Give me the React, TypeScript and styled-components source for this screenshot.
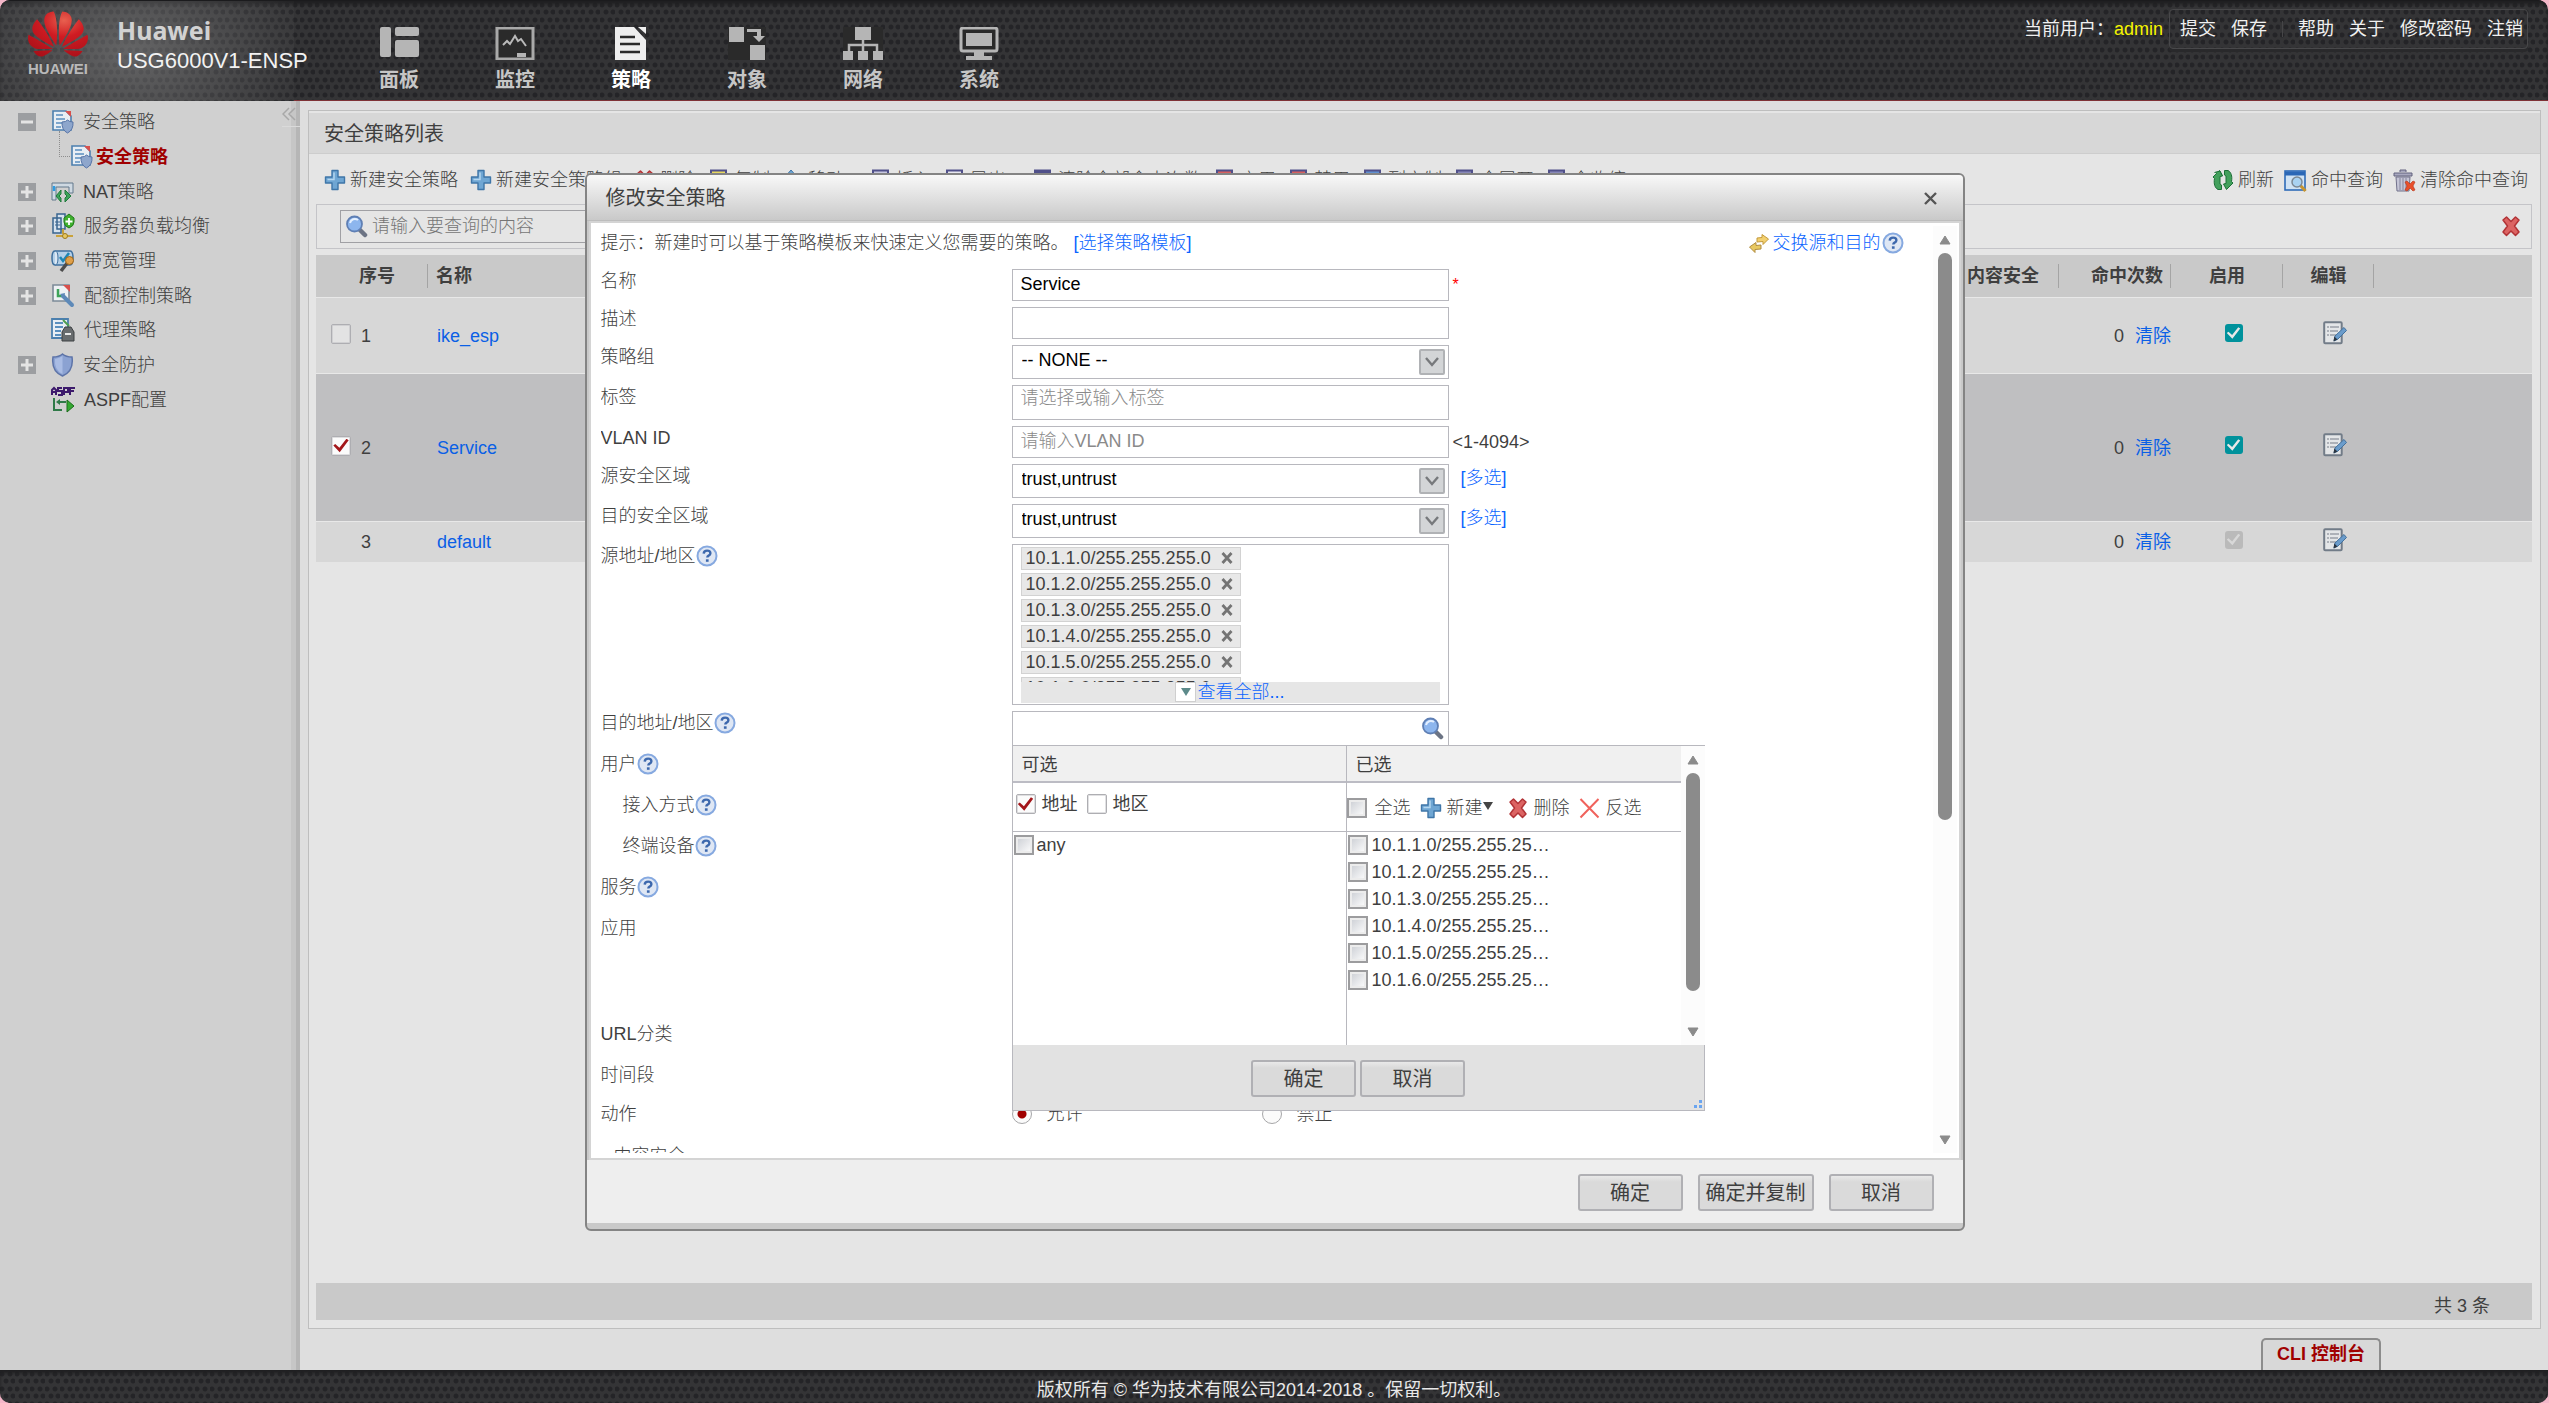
import React from 'react';
import styled, { createGlobalStyle, css } from 'styled-components';
import { SiHuawei } from 'react-icons/si';

const Global = createGlobalStyle`
  *, *::before, *::after { box-sizing: border-box; }
  body {
    margin: 0;
    background: #f4b6c8;
    color: #3f3f3f;
    font: 300 18px/24px "Liberation Sans", Arial, "Noto Sans CJK SC", sans-serif;
    overflow: hidden;
  }
  ul { list-style: none; margin: 0; padding: 0; }
  a { color: inherit; text-decoration: none; }
  button, input, select { font: inherit; color: inherit; }
  button { border: 0; padding: 0; background: none; cursor: pointer; }
  svg { display: block; flex: none; }
`;

const dots = css`
  background-color: #343436;
  background-image:
    radial-gradient(circle at 2px 4px, #242427 2px, transparent 3px),
    radial-gradient(circle at 10px 4px, #242427 2px, transparent 3px),
    radial-gradient(circle at 6px 11px, #242427 2px, transparent 3px),
    radial-gradient(circle at 13px 11px, #242427 2px, transparent 3px);
  background-size: 15px 15px;
`;

const App$ = styled.div`
  height: 100vh;
  margin-right: 1px;
  display: grid;
  grid-template-rows: 101px 1fr 33px;
  border-radius: 10px;
  overflow: hidden;
`;

/* ---------- header ---------- */
const Header = styled.header`
  ${dots}
  display: flex;
  border-top: 1px solid #1b1b1d;
  box-shadow: inset 0 3px 3px #1f1f21;
`;
const Brand = styled.div`
  width: 294px;
  flex: none;
  display: flex;
  gap: 29px;
  padding: 3px 0 0 28px;
  background: radial-gradient(ellipse 190px 130px at 130px 50px, rgba(150, 150, 150, 0.5), transparent);
  white-space: nowrap;
`;
const Logo = styled.div`
  width: 60px;
  font-weight: 700;
  font-size: 15px;
  line-height: 10px;
  color: #b9b9b9;
  text-align: center;
  display: flex;
  flex-direction: column;
  align-items: center;
`;
const BrandText = styled.div`
  padding-top: 11px;
  color: #f2f2f2;
  font-size: 22px;
  line-height: 32px;
`;
const BrandName = styled.div`
  font: 700 25px/30px "Noto Sans", sans-serif;
  color: #d2d2d2;
`;
const HeadRest = styled.div`
  flex: 1;
  display: flex;
  justify-content: space-between;
  border-bottom: 1px solid #7e3236;
`;
const MainNav = styled.nav`
  display: flex;
  gap: 36px;
  padding: 26px 0 0 65px;
`;
const NavItem = styled.a<{ $on?: boolean }>`
  width: 80px;
  display: flex;
  flex-direction: column;
  align-items: center;
  gap: 8px;
  font-weight: 700;
  font-size: 20px;
  line-height: 24px;
  color: ${p => (p.$on ? '#ffffff' : '#c6c6c6')};
`;
const UserArea = styled.div`
  display: flex;
  align-items: flex-start;
  padding: 8px 20px 0 0;
  font-weight: 400;
  color: #f0f0f0;
  line-height: 40px;
`;
const Admin = styled.span`
  color: #f5f500;
  padding-right: 6px;
`;
const UserLinks = styled.div`
  display: flex;
  gap: 15px;
  padding: 0 4px 0 10px;
  border: 1px solid #48484a;
  border-radius: 4px;
  box-shadow: 0 3px 0 #29292b;
  line-height: 38px;
`;
const Bar = styled.span`
  width: 0;
  height: 16px;
  align-self: center;
  border-left: 1px solid #454547;
`;

/* ---------- sidebar ---------- */
const Middle = styled.div`
  display: grid;
  grid-template-columns: 300px 1fr;
  min-height: 0;
`;
const Side = styled.aside`
  display: flex;
  justify-content: space-between;
  background: linear-gradient(90deg, #d0d0d0 0 291px, #c6c6c6 291px 296px, #b6b6b6 296px);
`;
const Tree = styled.ul`
  height: 312px;
  margin-top: 4px;
  display: grid;
  grid-auto-rows: 1fr;
`;
const TreeRow = styled.li<{ $sub?: boolean }>`
  display: flex;
  align-items: center;
  padding-left: ${p => (p.$sub ? 59 : 18)}px;
  a {
    display: flex;
    align-items: center;
    gap: ${p => (p.$sub ? 3 : 9)}px;
    color: ${p => (p.$sub ? '#a00000' : '#3f3f3f')};
    font-weight: ${p => (p.$sub ? 700 : 300)};
  }
`;
const Toggle = styled.button`
  width: 18px;
  height: 18px;
  margin-right: 15px;
  background: #9c9ea1;
  color: #e4e4e4;
`;
const NoToggle = styled.span`
  width: 33px;
`;
const Elbow = styled.span`
  width: 11px;
  height: 26px;
  margin-top: -26px;
  border: dotted #8d8d8d;
  border-width: 0 0 1px 1px;
`;
const Collapse = styled.button`
  width: 18px;
  height: 26px;
  border-bottom: 1px solid #dadada;
  color: #a8a8a8;
`;

/* ---------- main ---------- */
const Main = styled.main`
  display: flex;
  flex-direction: column;
  min-width: 0;
  padding: 9px 7px 0 8px;
  background: #dedede;
`;
const Panel = styled.section`
  flex: 1;
  display: flex;
  flex-direction: column;
  border: 1px solid #bebebe;
  background: #e5e5e5;
  padding-top: 2px;
`;
const PanelTitle = styled.h1`
  margin: 0;
  padding: 3px 0 0 15px;
  font-weight: 400;
  font-size: 20px;
  line-height: 37px;
  background: #d7d7d7;
  border-bottom: 1px solid #cdcdcd;
`;
const Toolbar = styled.div`
  height: 50px;
  display: flex;
  align-items: center;
  gap: 12px;
  padding: 2px 12px 0 15px;
  white-space: nowrap;
`;
const ToolTail = styled.div`
  display: flex;
  gap: 10px;
  margin-left: auto;
`;
const Tool = styled.button`
  display: flex;
  align-items: center;
  gap: 4px;
  font-weight: 300;
`;
const PanelBody = styled.div`
  flex: 1;
  display: flex;
  flex-direction: column;
  padding: 0 8px 8px 7px;
`;
const SearchBar = styled.div`
  height: 45px;
  display: flex;
  align-items: center;
  justify-content: space-between;
  padding: 0 9px 1px 23px;
  border: 1px solid #c4c4c8;
  margin-bottom: 6px;
`;
const SearchBox = styled.label`
  width: 400px;
  height: 33px;
  display: flex;
  align-items: center;
  gap: 4px;
  padding-left: 4px;
  border: 1px solid #a0a0a4;
`;
const BareInput = styled.input`
  flex: 1;
  min-width: 0;
  height: 100%;
  border: 0;
  padding: 0;
  outline: 0;
  background: transparent;
  &::placeholder { color: #757575; opacity: 1; }
`;
const Grid = styled.table`
  width: 100%;
  table-layout: fixed;
  border-collapse: separate;
  border-spacing: 0;
  th {
    height: 42px;
    padding: 0 8px;
    text-align: left;
    font-weight: 700;
    background: #c9c9c9 linear-gradient(#a4a4a4, #a4a4a4) right center / 1px 24px no-repeat;
  }
  td { padding: 0 0 0 9px; border-top: 1px solid #e8e8e8; }
`;
const Th = styled.th<{ $align?: string; $pad?: number; $plain?: boolean }>`
  &&& {
    text-align: ${p => p.$align || 'left'};
    ${p => p.$pad && `padding-${p.$align === 'right' ? 'right' : 'left'}: ${p.$pad}px;`}
    ${p => p.$plain && 'background-image: none;'}
  }
`;
const Tr = styled.tr<{ $h: number; $sel?: boolean }>`
  height: ${p => p.$h}px;
  background: ${p => (p.$sel ? '#bfbfc1' : '#d7d7d7')};
`;
const NumCell = styled.div`
  display: flex;
  align-items: center;
  gap: 10px;
  height: 24px;
  padding-left: 6px;
  > input { align-self: flex-start; }
`;
const Blank = styled.span`
  width: 20px;
`;
const RightCell = styled.div`
  display: flex;
  justify-content: flex-end;
  gap: 11px;
  font-weight: 400;
`;
const MidCell = styled.div`
  display: flex;
  justify-content: center;
  padding: 0 0 5px 4px;
`;
const RowLink = styled.a`
  color: #0a5fe6;
`;
const Summary = styled.div`
  height: 37px;
  margin-top: auto;
  padding: 4px 42px 0 0;
  text-align: right;
  line-height: 39px;
  background: #c9c9c9;
  font-weight: 400;
`;
const Bottom = styled.div`
  height: 41px;
  display: flex;
  justify-content: flex-end;
  align-items: flex-end;
  padding-right: 160px;
`;
const CliTab = styled.button`
  height: 32px;
  width: 120px;
  padding-bottom: 2px;
  border: 1px solid #8c8c8c;
  border-width: 2px 2px 0;
  border-radius: 5px 5px 0 0;
  background: #d8d8d8;
  color: #a00000;
  font-weight: 700;
`;
const Footer = styled.footer`
  ${dots}
  text-align: center;
  color: #e8e8e8;
  font-weight: 400;
  line-height: 41px;
  box-shadow: inset 0 3px 3px #1f1f21;
`;

/* ---------- controls ---------- */
const Check = styled.input.attrs({ type: 'checkbox' })<{ $kind?: 'teal' | 'grey' }>`
  appearance: none;
  flex: none;
  display: grid;
  place-items: center;
  width: 20px;
  height: 20px;
  margin: 0;
  border: 1px solid #aeaeb2;
  border-radius: 2px;
  background: rgba(255, 255, 255, 0.3);
  box-shadow: inset 0 0 0 1px rgba(180, 180, 184, 0.4);
  &:checked { background: #fbfbfb; }
  &:checked::before {
    content: '';
    width: 16px;
    height: 14px;
    background: #a3161a;
    clip-path: polygon(2% 50%, 14% 40%, 40% 66%, 84% 2%, 98% 12%, 42% 98%);
  }
  ${p => p.$kind === 'teal' && css`
    width: 18px;
    height: 18px;
    border: 0;
    border-radius: 3px;
    box-shadow: none;
    &:checked { background: #00929c; }
    &:checked:disabled { background: #bababa; }
    &:checked::before { background: #e8e8e8; width: 14px; height: 12px; }
    &:disabled::before { background: #d8d8d8; }
  `}
  ${p => p.$kind === 'grey' && css`
    border: 2px solid #9c9c9e;
    border-radius: 0;
    background: linear-gradient(135deg, #c9ccd2, #ffffff);
    box-shadow: inset 0 0 0 2px #ececec;
  `}
`;
const Radio = styled.input.attrs({ type: 'radio' })`
  appearance: none;
  width: 20px;
  height: 20px;
  margin: 0;
  border: 1px solid #a6a6a8;
  border-radius: 50%;
  background: #fbfbfb;
  &:checked { background: radial-gradient(circle, #a00000 4px, #fbfbfb 5px); }
`;
const Link = styled.a`
  color: #0a64ff;
`;

/* ---------- dialog ---------- */
const Overlay = styled.div`
  position: fixed;
  inset: 0;
  display: flex;
  align-items: center;
  justify-content: center;
`;
const Dialog = styled.div`
  width: 1380px;
  max-width: 96vw;
  height: 1058px;
  max-height: 96vh;
  display: flex;
  flex-direction: column;
  border: 2px solid #848484;
  border-radius: 6px;
  background: #c9c9c9;
  padding-bottom: 6px;
  overflow: hidden;
  font-weight: 300;
`;
const DialogHead = styled.div`
  height: 46px;
  flex: none;
  display: flex;
  align-items: center;
  justify-content: space-between;
  padding: 2px 25px 0 19px;
  background: linear-gradient(#f8f8f8, #c9c9c9);
  border-bottom: 1px solid #bdbdbd;
  h2 { margin: 0; font-size: 20px; font-weight: 400; }
`;
const DialogBody = styled.div`
  flex: 1;
  min-height: 0;
  display: flex;
  margin: 0 2px;
  padding: 3px 2px 5px 10px;
  border: 2px solid #d4d4d4;
  background: #ffffff;
`;
const Scroll = styled.div`
  flex: 1;
  min-width: 0;
  overflow: hidden;
`;
const HintLine = styled.div`
  height: 43px;
  display: flex;
  align-items: flex-start;
  padding: 5px 29px 0 0;
`;
const Swap = styled.span`
  margin-left: auto;
  display: flex;
  align-items: center;
  gap: 1px;
`;
const SwapLink = styled(Link)`
  display: flex;
  align-items: center;
  gap: 3px;
`;
const Fields = styled.div`
  display: flex;
  flex-direction: column;
  gap: 6px;
`;
const Field = styled.div<{ $h: number; $indent?: number }>`
  flex: none;
  height: ${p => p.$h}px;
  display: grid;
  grid-template: 100% / 411px 1fr;
  > :first-child { padding-left: ${p => p.$indent || 0}px; }
`;
const LabelCell = styled.div`
  display: flex;
  height: 24px;
  align-items: center;
`;
const Control = styled.div`
  min-height: 0;
  display: flex;
  align-items: center;
`;
const Box = styled.div`
  position: relative;
  width: 437px;
  height: 100%;
  border: 1px solid #b8b8be;
  background: #ffffff;
`;
const TextInput = styled.input<{ $top?: boolean }>`
  width: 437px;
  height: 100%;
  padding: 0 8px ${p => (p.$top ? 8 : 0)}px;
  border: 1px solid #b8b8be;
  color: #000000;
  outline: 0;
  &::placeholder { color: #8a8a8a; opacity: 1; }
`;
const Select = styled.select`
  appearance: none;
  width: 100%;
  height: 100%;
  padding: 0 36px 4px 9px;
  border: 0;
  background: transparent;
  color: #000000;
`;
const Arrow = styled.span`
  position: absolute;
  right: 3px;
  top: 3px;
  bottom: 3px;
  width: 26px;
  display: grid;
  place-items: center;
  border: 2px solid #b0b2b5;
  border-radius: 2px;
  background: #d3d5d7;
  pointer-events: none;
`;
const After = styled.span<{ $gap?: number; $red?: boolean }>`
  padding-left: ${p => p.$gap || 4}px;
  ${p => p.$red && 'color: #ff0000; font-size: 16px;'}
  ${p => p.$gap && 'padding-bottom: 6px;'}
`;
const TagBox = styled(Box)`
  padding: 2px 8px 1px;
  display: flex;
  flex-direction: column;
`;
const Tags = styled.ul`
  flex: 1;
  min-height: 0;
  overflow: hidden;
  display: flex;
  flex-direction: column;
  align-items: flex-start;
  gap: 3px;
`;
const Tag = styled.li`
  flex: none;
  width: 220px;
  height: 23px;
  display: flex;
  align-items: center;
  justify-content: space-between;
  padding: 0 7px 0 4px;
  border: 1px solid #d2d2d2;
  background: #e8e8e8;
  line-height: 20px;
`;
const MoreBar = styled.button`
  flex: none;
  height: 21px;
  display: flex;
  align-items: center;
  justify-content: center;
  gap: 1px;
  background: #e6e6e6;
  color: #0a64ff;
  font-weight: 300;
  line-height: 20px;
`;
const MoreArrow = styled.span`
  width: 21px;
  height: 20px;
  display: grid;
  place-items: center;
  border: 1px solid #cfcfcf;
  background: #ffffff;
`;
const FindBox = styled(Box)`
  display: flex;
  align-items: center;
  padding: 0 4px 0 8px;
`;
const RadioLabel = styled.label`
  display: flex;
  align-items: center;
  gap: 15px;
  width: 250px;
`;
const HelpBtn = styled.button`
  width: 22px;
  height: 22px;
`;
const DialogFoot = styled.div`
  height: 63px;
  flex: none;
  display: flex;
  justify-content: flex-end;
  align-items: center;
  gap: 15px;
  padding: 2px 29px 0 0;
  background: #eeeeee;
`;
const Btn = styled.button`
  min-width: 105px;
  height: 37px;
  padding: 2px 6px 0;
  border: 2px solid #b0b0b4;
  border-radius: 3px;
  background: linear-gradient(#e9e9e9, #dadada 6px);
  font-weight: 400;
  font-size: 20px;
`;

/* scroll bars */
const Rail = styled.div`
  width: 24px;
  flex: none;
  display: flex;
  flex-direction: column;
  align-items: center;
  padding: 9px 0 8px;
  background: #fcfcfc;
`;
const Thumb = styled.div<{ $grow: number }>`
  flex: ${p => p.$grow} 1 0;
  width: 14px;
  margin-top: 8px;
  border-radius: 7px;
  background: #8b8b8b;
`;
const RailRest = styled.div<{ $grow: number }>`
  flex: ${p => p.$grow} 1 0;
`;

/* ---------- picker popup ---------- */
const Picker = styled.div`
  position: absolute;
  z-index: 2;
  left: -1px;
  top: 100%;
  width: 693px;
  height: 366px;
  display: flex;
  flex-direction: column;
  border: 1px solid #b8b8be;
  background: #ffffff;
  font-weight: 400;
`;
const PickerMain = styled.div`
  flex: 1;
  min-height: 0;
  display: grid;
  grid-template-columns: 1fr 1fr 23px;
`;
const Column = styled.div`
  border-right: 1px solid #b8b8be;
  & + & { border-right: 0; }
`;
const ColHead = styled.div`
  height: 37px;
  padding-left: 9px;
  line-height: 38px;
  background: #f0f0f0;
  border-bottom: 2px solid #bcbcc4;
`;
const ColTools = styled.div<{ $thin?: boolean }>`
  height: 49px;
  display: flex;
  align-items: center;
  gap: 9px;
  padding: ${p => (p.$thin ? '3px 0 0 0' : '0 0 5px 3px')};
  border-bottom: 1px solid #b8b8be;
  font-weight: ${p => (p.$thin ? 300 : 400)};
  button { gap: 5px; }
`;
const MenuCaret = styled.span`
  margin: 0 5px 4px -5px;
`;
const Pick = styled.label<{ $gap?: number }>`
  display: flex;
  align-items: center;
  gap: ${p => p.$gap || 6}px;
`;
const PickList = styled.ul`
  padding: 0 0 0 1px;
  li { height: 27px; display: flex; align-items: center; }
`;
const PickerFoot = styled.div`
  position: relative;
  height: 65px;
  display: flex;
  align-items: center;
  justify-content: center;
  gap: 4px;
  padding-top: 2px;
  background: #e2e2e2;
`;
const Grip = styled.span`
  position: absolute;
  right: 1px;
  bottom: 1px;
`;

/* ---------- icons ---------- */
const Plus = () => (
  <svg width="22" height="22" viewBox="0 0 22 22">
    <path d="M8 1.500h6v6.500h6.500v6H14v6.500H8V14H1.500V8H8z" fill="#6fa6d3" stroke="#3f76a8" strokeWidth="1.400" strokeLinejoin="round" />
    <path d="M10 3.500v7H3.500" stroke="#b4d6f0" strokeWidth="1.500" fill="none" />
  </svg>
);
const RedX = () => (
  <svg width="22" height="22" viewBox="0 0 22 22">
    <path d="M3 5l3.500-3L11 6.500 15.500 2 19 5l-4.500 6 4.500 6-3.500 3.500L11 16l-4.500 4.500L3 17l4.500-6z" fill="#dc6463" stroke="#b23336" strokeWidth="1.500" strokeLinejoin="round" />
  </svg>
);
const ThinX = () => (
  <svg width="22" height="22" viewBox="0 0 22 22">
    <path d="M1.500 2l18 18.500M19.500 2l-18 18.500" stroke="#f0625c" strokeWidth="2" />
  </svg>
);
const Glass = () => (
  <svg width="23" height="23" viewBox="0 0 23 23">
    <path d="M14 14l6 6" stroke="#6c7484" strokeWidth="4.500" strokeLinecap="round" />
    <circle cx="9.500" cy="9" r="7.500" fill="#8db6ee" stroke="#5f7fb4" strokeWidth="1.800" />
    <path d="M5 8a5 5 0 0 1 8-3" stroke="#e4f0ff" strokeWidth="2" fill="none" />
  </svg>
);
const Help = () => (
  <HelpBtn type="button" aria-label="帮助">
    <svg width="22" height="22" viewBox="0 0 22 22">
      <circle cx="11" cy="11" r="9.500" fill="#dfe7f4" stroke="#86a9e0" strokeWidth="2" />
      <path d="M7.700 8.600q.2-3 3.400-3 3.300 0 3.300 2.600 0 1.500-1.800 2.400-1.300.7-1.300 2" fill="none" stroke="#3d68ad" strokeWidth="2.400" />
      <rect x="9.900" y="14.300" width="2.700" height="2.500" fill="#3d68ad" />
    </svg>
  </HelpBtn>
);
const Refresh = () => (
  <svg width="22" height="22" viewBox="0 0 22 22">
    <path d="M9.500 20.500H6C3 19 1.500 15 2.500 9.500L1 8l6.500-6.500L10.500 7 8 7.500V15l1.500 1z" fill="#43a05c" stroke="#1d7038" />
    <path d="M2.500 3.500L8 2l2.500 5" fill="#43a05c" stroke="#1d7038" />
    <path d="M12.500 1.500H16c3 1.500 4.500 5.500 3.500 11l1.500 1.500-6.500 6.500-3-5.500 2.500-.5V7l-1.500-1z" fill="#43a05c" stroke="#1d7038" />
  </svg>
);
const HitQuery = () => (
  <svg width="23" height="23" viewBox="0 0 23 23">
    <rect x="1" y="2" width="20" height="19" fill="#cfe2f4" stroke="#2f6cb8" strokeWidth="1.600" />
    <path d="M1 4.500h20" stroke="#2b67b6" strokeWidth="4" />
    <path d="M16 16l5.500 6" stroke="#c79530" strokeWidth="3" />
    <circle cx="13" cy="13" r="5" fill="#a9d2f2" stroke="#7c8894" strokeWidth="1.500" />
  </svg>
);
const Trash = () => (
  <svg width="23" height="23" viewBox="0 0 23 23">
    <path d="M7 3V1h6v2M1 4h18v3H1z" fill="#a9a9c0" stroke="#63637e" />
    <path d="M3 8h14l-1 14H4z" fill="#c5c5d6" stroke="#70708a" />
    <path d="M7 9v12M10 9v12M13 9v12" stroke="#85859c" />
    <path d="M12 13l2-1 3 3 3-3 2 1-2 4 2 4-2 1-3-3-3 3-2-1 2-4z" fill="#e8502c" stroke="#b53214" strokeWidth=".6" />
  </svg>
);
const EditIcon = () => (
  <svg width="24" height="24" viewBox="0 0 24 24">
    <rect x="1.200" y="1.200" width="17.500" height="21" rx="1" fill="#e4e6e8" stroke="#727c88" strokeWidth="2" />
    <path d="M4 6h2M7 6h9M4 10h2M7 10h8M4 14h2M7 14h6" stroke="#9aa0a8" strokeWidth="1.500" />
    <path d="M11 20l1-5 9-8.500 2.500 3L15 18z" fill="#6b9ccb" stroke="#44719c" />
    <path d="M10.500 20.500l.8-5 3.200 3z" fill="#2c3642" />
  </svg>
);
const SmallX = ({ s = 12 }: { s?: number }) => (
  <svg width={s} height={s} viewBox="0 0 12 12"><path d="M1.500 1l9 10M10.500 1l-9 10" stroke="#747474" strokeWidth="2.800" /></svg>
);
const CloseX = () => (
  <svg width="15" height="15" viewBox="0 0 15 15"><path d="M2 2l11 11M13 2L2 13" stroke="#555" strokeWidth="2.400" /></svg>
);
const Tri = ({ up }: { up?: boolean }) => (
  <svg width="12" height="10" viewBox="0 0 12 10">
    <path d={up ? 'M6 1L11 9H1z' : 'M6 9L1 1h10z'} fill="#8b8b8b" stroke="#8b8b8b" strokeLinejoin="round" />
  </svg>
);
const Caret = ({ c = '#444' }: { c?: string }) => (
  <svg width="10" height="8" viewBox="0 0 10 8"><path d="M0 0h10L5 8z" fill={c} /></svg>
);
const Sheet = ({ c }: { c: string }) => (
  <svg width="22" height="22" viewBox="0 0 22 22"><rect x="3" y="1.500" width="15" height="18" fill={c} stroke="#50508a" strokeWidth="2" /></svg>
);
const MoveIcon = () => (
  <svg width="22" height="22" viewBox="0 0 22 22"><path d="M9 1l7 8h-4v11H6V9H2z" fill="#6fa6d3" stroke="#3f76a8" /></svg>
);
const SwapIcon = () => (
  <svg width="22" height="22" viewBox="0 0 22 22">
    <path d="M9 6l5-.5V2.500L20.500 7 15 12.500V9.500L9 10z" fill="#f2d070" stroke="#c49a3c" strokeLinejoin="round" />
    <path d="M13 13l-5 .5v-3L1.500 15 7 20.500v-3l6-.5z" fill="#e8c860" stroke="#b08c40" strokeLinejoin="round" />
  </svg>
);
const PolicyIcon = () => (
  <svg width="23" height="24" viewBox="0 0 23 24">
    <path d="M2 1h13l5 5v14H2z" fill="#e8eef4" stroke="#4b7fae" strokeWidth="1.600" />
    <path d="M14 1l6 6V1z" fill="#d8504c" />
    <path d="M5 5h7M5 9h9M5 13h6M5 17h5" stroke="#5a8fbe" strokeWidth="1.600" />
    <path d="M11 12q4 0 5.500-2 2 2 5.500 2 .5 8-5.500 11-6-3-5.500-11z" fill="#8ea6cc" stroke="#5673a6" />
  </svg>
);
const NatIcon = () => (
  <svg width="23" height="24" viewBox="0 0 23 24">
    <path d="M1 3h21v10h-4V7H5v13H1z" fill="#cfd9e2" stroke="#63788c" />
    <path d="M3 6v5" stroke="#2f9be0" strokeWidth="2.500" />
    <path d="M10 10l-5 6 5 6v-4l-2-2 2-2zM14 10v4l2 2-2 2v4l6-6z" fill="#3da35a" stroke="#1f7a3b" />
  </svg>
);
const SlbIcon = () => (
  <svg width="24" height="26" viewBox="0 0 24 26">
    <path d="M6 1h8v15H6zM2 5h8v15H2z" fill="#d6e2ee" stroke="#39648f" strokeWidth="1.500" />
    <path d="M4 9h5M4 12h5" stroke="#39648f" />
    <path d="M18 1l5 4v4q0 4-5 6-5-2-5-6V5z" fill="#3fb02e" stroke="#1f7a18" />
    <path d="M18 5v7M14.500 8.500h7" stroke="#fff" strokeWidth="1.800" />
    <path d="M12 16v5M5 23h17" stroke="#c9a23a" strokeWidth="2" /><circle cx="14" cy="23" r="2.500" fill="#e8c860" stroke="#9b7a20" />
  </svg>
);
const BandIcon = () => (
  <svg width="24" height="24" viewBox="0 0 24 24">
    <path d="M4 2h15q3 0 3 7t-3 7H4q-3 0-3-7t3-7z" fill="#b4d0e8" stroke="#3d6f9e" strokeWidth="1.500" />
    <path d="M4 2q3 0 3 7t-3 7" fill="#dce8f4" stroke="#3d6f9e" />
    <path d="M9 8l3 4 6-8" stroke="#1e86b4" strokeWidth="2.500" fill="none" />
    <path d="M10 22l7-9" stroke="#4c4c4c" strokeWidth="3.500" /><circle cx="18.500" cy="11.500" r="4" fill="#e0a04a" stroke="#9c6418" />
  </svg>
);
const QuotaIcon = () => (
  <svg width="24" height="26" viewBox="0 0 24 26">
    <path d="M2 2h16v16H2z" fill="#edf1f4" stroke="#7c8a98" strokeWidth="1.600" />
    <path d="M12 2l7 7V2z" fill="#d8504c" /><path d="M7 6v7h6" stroke="#3da35a" strokeWidth="2.500" fill="none" />
    <path d="M12 13l9 9" stroke="#5d89b8" strokeWidth="4" strokeLinecap="round" /><path d="M9 11l5-1-1 5z" fill="#5d89b8" />
  </svg>
);
const ProxyIcon = () => (
  <svg width="24" height="24" viewBox="0 0 24 24">
    <path d="M1 1h16v19H1z" fill="#e8eef4" stroke="#4b7fae" strokeWidth="1.800" />
    <path d="M4 5h8M4 9h8M4 13h6M4 17h6" stroke="#5a8fbe" strokeWidth="1.800" />
    <path d="M12 2l6 6" stroke="#4f9e4f" strokeWidth="2" />
    <path d="M11 14l3-5h6l3 5v9H11z" fill="#686c6e" stroke="#3c4042" /><path d="M14 16h6" stroke="#e8e8e8" strokeWidth="2" />
  </svg>
);
const ShieldIcon = () => (
  <svg width="23" height="24" viewBox="0 0 23 24">
    <path d="M2 4q6 0 9.500-3Q15 4 21 4q2 14-9.500 19Q0 18 2 4z" fill="#8ba2d2" stroke="#5d74a8" strokeWidth="1.500" />
    <path d="M11.500 3v18Q3 17 4 6q5-1 7.500-3z" fill="#a9bce4" />
  </svg>
);
const AspfIcon = () => (
  <svg width="24" height="27" viewBox="0 0 24 27">
    <path d="M1 9V4l2-2 2 2v5M1 6h4M11 2H7v3h4v4H7M13 9V2h4v4h-4M19 9V2h5M19 5h4" fill="none" stroke="#3c1a6c" strokeWidth="2" />
    <path d="M3 12v12h8M7 16h8" stroke="#2f7a48" strokeWidth="2" fill="none" />
    <path d="M9 13l-4 3 4 3z" fill="#2f7a48" /><path d="M16 14l7 6-7 6z" fill="#34a832" stroke="#1a6c1a" />
  </svg>
);

const navIcons: Record<string, React.ReactNode> = {
  面板: <><rect x="1" width="11" height="30" rx="2" /><rect x="16" width="24" height="9" rx="2" /><rect x="16" y="13" width="24" height="17" rx="2" /></>,
  监控: <><rect x="2" y="1" width="36" height="31" fill="#2a2a2a" stroke="#a9a9a9" strokeWidth="3" /><path d="M8 18l4-4 3 3 5-8 3 5 3-2 5 7" fill="none" stroke="#b9b9b9" strokeWidth="2" /><path d="M22 26h9v4h-9z" /></>,
  策略: <g fill="#eee"><path d="M4 0h19l12 13v20H4z" /><path d="M27 0h8v7z" /><path d="M9 10h15M9 17h20M9 25h20" stroke="#2a2a2a" strokeWidth="2.500" /></g>,
  对象: <><path d="M1 0h38v33H1z" fill="#2a2a2a" /><path d="M2 0h15v15H2zM23 18h15v15H23zM20 2h14v7h4l-6 6-6-6h4V5H20z" /></>,
  网络: <><path d="M0 0h40v33H0z" fill="#2a2a2a" /><path d="M12 0h16v13H12zM0 24h10v9H0zM15 24h10v9H15zM30 24h10v9H30z" /><path d="M20 13v11M6 24v-6h28v6" fill="none" stroke="#b5b5b5" strokeWidth="2.500" /></>,
  系统: <><rect x="2" y="1" width="36" height="23" rx="2" fill="#2a2a2a" stroke="#b5b5b5" strokeWidth="3" /><path d="M7 6h26v13H7zM15 24h10v5h8v4H7v-4h8z" /></>,
};

const tree = [
  { t: '安全策略', i: <PolicyIcon />, e: '-' },
  { t: '安全策略', i: <PolicyIcon />, sub: true },
  { t: 'NAT策略', i: <NatIcon />, e: '+' },
  { t: '服务器负载均衡', i: <SlbIcon />, e: '+' },
  { t: '带宽管理', i: <BandIcon />, e: '+' },
  { t: '配额控制策略', i: <QuotaIcon />, e: '+' },
  { t: '代理策略', i: <ProxyIcon /> },
  { t: '安全防护', i: <ShieldIcon />, e: '+' },
  { t: 'ASPF配置', i: <AspfIcon /> },
];

const tools: { t: string; i: React.ReactNode; menu?: boolean }[] = [
  { t: '新建安全策略', i: <Plus /> },
  { t: '新建安全策略组', i: <Plus /> },
  { t: '删除', i: <RedX /> },
  { t: '复制', i: <Sheet c="#e8d860" /> },
  { t: '移动', i: <MoveIcon />, menu: true },
  { t: '插入', i: <Sheet c="#c8c8e0" /> },
  { t: '导出', i: <Sheet c="#e8e8f0" />, menu: true },
  { t: '清除全部命中次数', i: <Sheet c="#50508a" /> },
  { t: '启用', i: <Sheet c="#d86060" /> },
  { t: '禁用', i: <Sheet c="#d86060" /> },
  { t: '列定制', i: <Sheet c="#6090d0" /> },
  { t: '全展开', i: <Sheet c="#8888b8" /> },
  { t: '全收缩', i: <Sheet c="#8888b8" /> },
];

const rows = [
  { n: 1, name: 'ike_esp', h: 76, box: true, on: false },
  { n: 2, name: 'Service', h: 148, box: true, on: true },
  { n: 3, name: 'default', h: 41, box: false, on: false },
];

const nets = [1, 2, 3, 4, 5, 6].map(n => `10.1.${n}.0/255.255.255.0`);

const Row = ({ label, id, h = 35, help, indent, children }: {
  label: string; id?: string; h?: number; help?: boolean; indent?: number; children?: React.ReactNode;
}) => (
  <Field $h={h} $indent={indent}>
    <LabelCell>
      {id ? <label htmlFor={id}>{label}</label> : <span>{label}</span>}
      {help && <Help />}
    </LabelCell>
    <Control>{children}</Control>
  </Field>
);

const Drop = ({ id, value }: { id: string; value: string }) => (
  <Box>
    <Select id={id} defaultValue={value}><option>{value}</option></Select>
    <Arrow>
      <svg width="14" height="10" viewBox="0 0 14 10"><path d="M1 1l6 7 6-7" fill="none" stroke="#77797c" strokeWidth="2.400" /></svg>
    </Arrow>
  </Box>
);

const ScrollBar = ({ a, b }: { a: number; b: number }) => (
  <Rail aria-hidden>
    <Tri up />
    <Thumb $grow={a} />
    <RailRest $grow={b} />
    <Tri />
  </Rail>
);

const AddressPicker = () => (
  <Picker>
    <PickerMain>
      <Column>
        <ColHead>可选</ColHead>
        <ColTools>
          <Pick><Check defaultChecked />地址</Pick>
          <Pick><Check />地区</Pick>
        </ColTools>
        <PickList><li><Pick $gap={3}><Check $kind="grey" />any</Pick></li></PickList>
      </Column>
      <Column>
        <ColHead>已选</ColHead>
        <ColTools $thin>
          <Pick $gap={8}><Check $kind="grey" />全选</Pick>
          <Tool><Plus />新建<MenuCaret><Caret /></MenuCaret></Tool>
          <Tool><RedX />删除</Tool>
          <Tool><ThinX />反选</Tool>
        </ColTools>
        <PickList>
          {nets.map(n => (
            <li key={n}><Pick $gap={4}><Check $kind="grey" />{n.slice(0, -3)}…</Pick></li>
          ))}
        </PickList>
      </Column>
      <ScrollBar a={219} b={36} />
    </PickerMain>
    <PickerFoot>
      <Btn>确定</Btn>
      <Btn>取消</Btn>
      <Grip>
        <svg width="9" height="9" viewBox="0 0 9 9"><path d="M5 0h3v3H5zM0 5h3v3H0zM5 5h3v3H5z" fill="#6aa5f0" /></svg>
      </Grip>
    </PickerFoot>
  </Picker>
);

const PolicyDialog = () => (
  <Overlay>
    <Dialog role="dialog" aria-labelledby="dlg-title">
      <DialogHead>
        <h2 id="dlg-title">修改安全策略</h2>
        <button aria-label="关闭"><CloseX /></button>
      </DialogHead>
      <DialogBody>
        <Scroll>
          <HintLine>
            <span>提示：新建时可以基于策略模板来快速定义您需要的策略。 <Link href="#tpl">[选择策略模板]</Link></span>
            <Swap><SwapLink href="#swap"><SwapIcon />交换源和目的</SwapLink><Help /></Swap>
          </HintLine>
          <Fields>
            <Row label="名称" id="f-name" h={32}><TextInput id="f-name" defaultValue="Service" /><After $red>*</After></Row>
            <Row label="描述" id="f-desc" h={32}><TextInput id="f-desc" /></Row>
            <Row label="策略组" id="f-group" h={34}><Drop id="f-group" value="-- NONE --" /></Row>
            <Row label="标签" id="f-tag"><TextInput id="f-tag" $top placeholder="请选择或输入标签" /></Row>
            <Row label="VLAN ID" id="f-vlan" h={32}><TextInput id="f-vlan" placeholder="请输入VLAN ID" /><After>&lt;1-4094&gt;</After></Row>
            <Row label="源安全区域" id="f-src" h={34}><Drop id="f-src" value="trust,untrust" /><After $gap={12}><Link href="#src">[多选]</Link></After></Row>
            <Row label="目的安全区域" id="f-dst" h={34}><Drop id="f-dst" value="trust,untrust" /><After $gap={12}><Link href="#dst">[多选]</Link></After></Row>
            <Row label="源地址/地区" h={161} help>
              <TagBox>
                <Tags>
                  {nets.map(n => (
                    <Tag key={n}>{n}<button aria-label={`删除 ${n}`}><SmallX /></button></Tag>
                  ))}
                </Tags>
                <MoreBar><MoreArrow><Caret c="#5d8a8a" /></MoreArrow>查看全部...</MoreBar>
              </TagBox>
            </Row>
            <Row label="目的地址/地区" id="f-addr" help>
              <FindBox>
                <BareInput id="f-addr" />
                <button aria-label="查询"><Glass /></button>
                <AddressPicker />
              </FindBox>
            </Row>
            <Row label="用户" help />
            <Row label="接入方式" indent={22} help />
            <Row label="终端设备" indent={22} help />
            <Row label="服务" help />
            <Row label="应用" h={100} />
            <Row label="URL分类" />
            <Row label="时间段" h={33} />
            <Row label="动作" h={24}>
              <RadioLabel><Radio name="action" defaultChecked />允许</RadioLabel>
              <RadioLabel><Radio name="action" />禁止</RadioLabel>
            </Row>
            <Row label="" h={6} />
            <Row label="内容安全" indent={13} />
          </Fields>
        </Scroll>
        <ScrollBar a={568} b={315} />
      </DialogBody>
      <DialogFoot>
        <Btn>确定</Btn>
        <Btn>确定并复制</Btn>
        <Btn>取消</Btn>
      </DialogFoot>
    </Dialog>
  </Overlay>
);

export default function App() {
  return (
    <>
      <Global />
      <App$>
        <Header>
          <Brand>
            <Logo>
              <svg width="0" height="0">
                <defs>
                  <radialGradient id="petal" cx="60%" cy="20%" r="90%">
                    <stop offset="0" stopColor="#e8604f" />
                    <stop offset="0.4" stopColor="#cf1b22" />
                    <stop offset="1" stopColor="#a80f18" />
                  </radialGradient>
                </defs>
              </svg>
              <SiHuawei size={60} fill="url(#petal)" />
              <span>HUAWEI</span>
            </Logo>
            <BrandText><BrandName>Huawei</BrandName>USG6000V1-ENSP</BrandText>
          </Brand>
          <HeadRest>
            <MainNav>
              {Object.keys(navIcons).map(k => (
                <NavItem key={k} href={`#${k}`} $on={k === '策略'}>
                  <svg width="40" height="33" viewBox="0 0 40 33" fill="#b5b5b5">{navIcons[k]}</svg>
                  {k}
                </NavItem>
              ))}
            </MainNav>
            <UserArea>
              当前用户：<Admin>admin</Admin>
              <UserLinks>
                <a href="#commit">提交</a><a href="#save">保存</a><Bar />
                <a href="#help">帮助</a><a href="#about">关于</a><a href="#pwd">修改密码</a><a href="#exit">注销</a>
              </UserLinks>
            </UserArea>
          </HeadRest>
        </Header>

        <Middle>
          <Side>
            <Tree>
              {tree.map((n, k) => (
                <TreeRow key={k} $sub={n.sub}>
                  {n.sub ? <Elbow /> : n.e ? (
                    <Toggle aria-label={n.e === '+' ? '展开' : '收起'}>
                      <svg width="18" height="18" viewBox="0 0 18 18">
                        <path d={n.e === '+' ? 'M3 9h12M9 3v12' : 'M3 9h12'} stroke="currentColor" strokeWidth="3" />
                      </svg>
                    </Toggle>
                  ) : <NoToggle />}
                  <a href={`#tree${k}`}>{n.i}{n.t}</a>
                </TreeRow>
              ))}
            </Tree>
            <Collapse aria-label="折叠">
              <svg width="14" height="14" viewBox="0 0 14 14"><path d="M7 1L1 7l6 6M13 1L7 7l6 6" fill="none" stroke="currentColor" strokeWidth="1.500" /></svg>
            </Collapse>
          </Side>

          <Main>
            <Panel>
              <PanelTitle>安全策略列表</PanelTitle>
              <Toolbar>
                {tools.map(t => <Tool key={t.t}>{t.i}{t.t}{t.menu && <Caret />}</Tool>)}
                <ToolTail>
                  <Tool><Refresh />刷新</Tool>
                  <Tool><HitQuery />命中查询</Tool>
                  <Tool><Trash />清除命中查询</Tool>
                </ToolTail>
              </Toolbar>
              <PanelBody>
                <SearchBar>
                  <SearchBox><Glass /><BareInput placeholder="请输入要查询的内容" /></SearchBox>
                  <button aria-label="清空"><RedX /></button>
                </SearchBar>
                <Grid>
                  <colgroup>
                    <col style={{ width: 112 }} /><col /><col style={{ width: 260 }} />
                    <col style={{ width: 112 }} /><col style={{ width: 112 }} />
                    <col style={{ width: 91 }} /><col style={{ width: 158 }} />
                  </colgroup>
                  <thead>
                    <tr>
                      <Th $pad={43}>序号</Th>
                      <Th>名称</Th>
                      <Th $align="right" $pad={20}>内容安全</Th>
                      <Th $align="right">命中次数</Th>
                      <Th $align="center">启用</Th>
                      <Th $align="center">编辑</Th>
                      <Th $plain />
                    </tr>
                  </thead>
                  <tbody>
                    {rows.map(r => (
                      <Tr key={r.n} $h={r.h} $sel={r.on}>
                        <td>
                          <NumCell>
                            {r.box ? <Check defaultChecked={r.on} aria-label={`选择 ${r.name}`} /> : <Blank />}
                            {r.n}
                          </NumCell>
                        </td>
                        <td><RowLink href={`#${r.name}`}>{r.name}</RowLink></td>
                        <td />
                        <td><RightCell>0<RowLink href="#clear">清除</RowLink></RightCell></td>
                        <td><MidCell><Check $kind="teal" defaultChecked disabled={!r.box} aria-label="启用" /></MidCell></td>
                        <td><MidCell><button aria-label="编辑"><EditIcon /></button></MidCell></td>
                        <td />
                      </Tr>
                    ))}
                  </tbody>
                </Grid>
                <Summary>共 3 条</Summary>
              </PanelBody>
            </Panel>
            <Bottom><CliTab>CLI 控制台</CliTab></Bottom>
          </Main>
        </Middle>

        <Footer>版权所有 © 华为技术有限公司2014-2018 。保留一切权利。</Footer>
      </App$>
      <PolicyDialog />
    </>
  );
}
